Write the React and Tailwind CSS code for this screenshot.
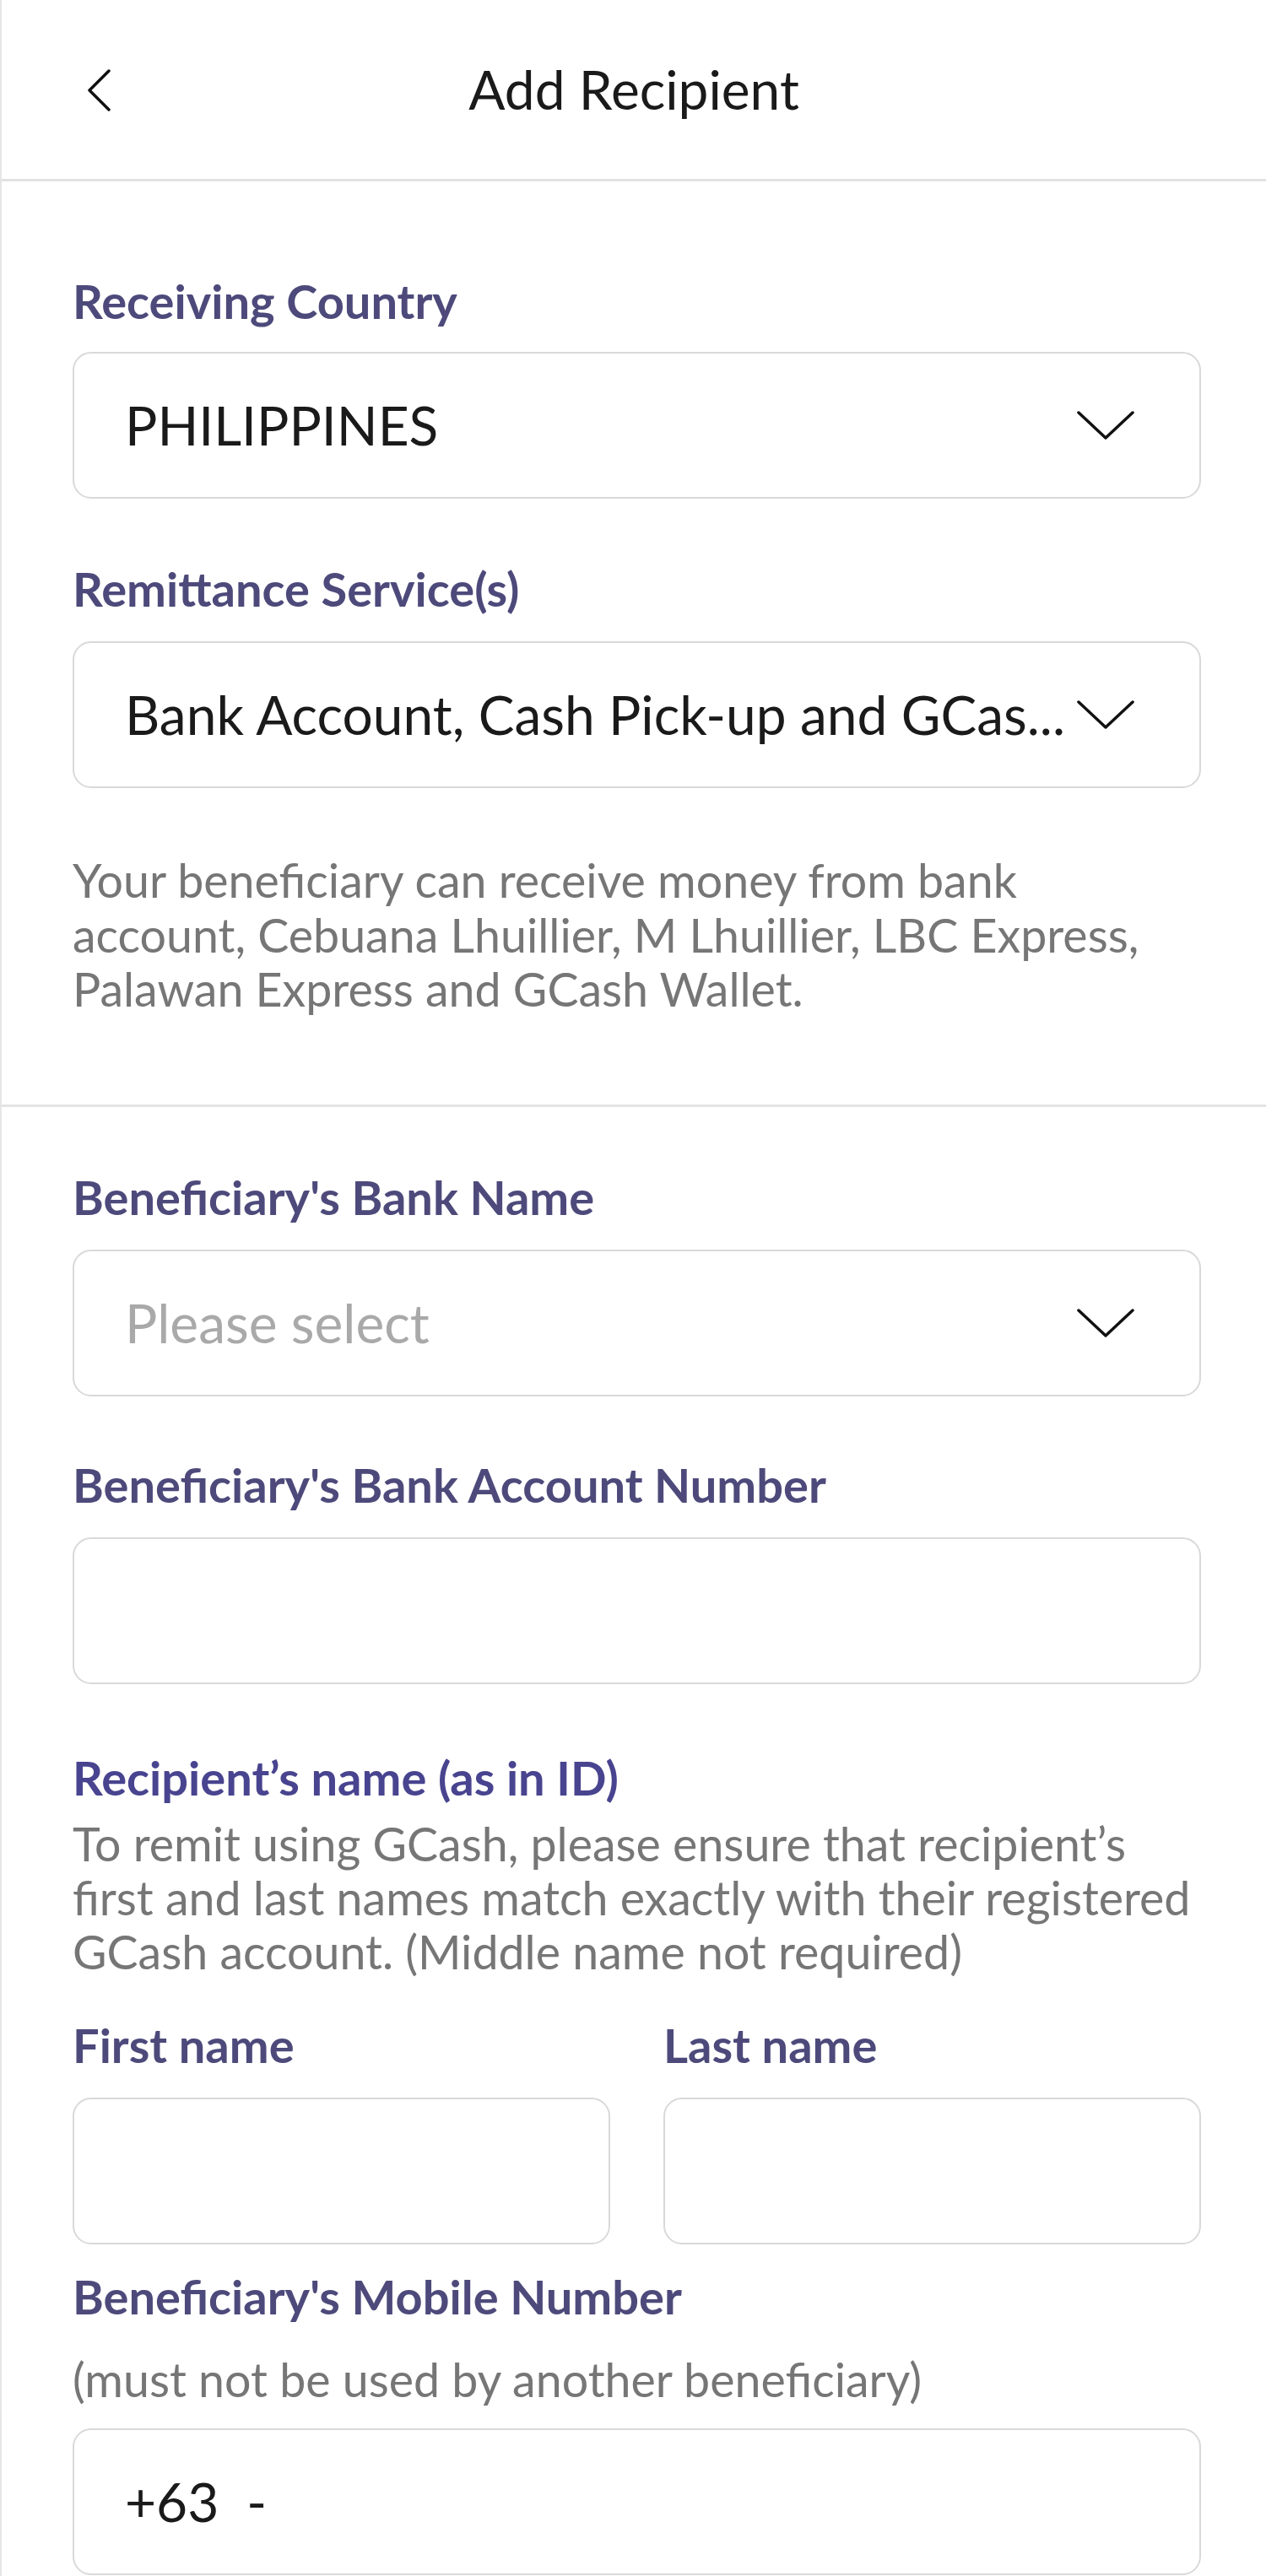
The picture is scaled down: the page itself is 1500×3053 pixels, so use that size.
import React from "react";

const Chevron = () => (
  <svg width="68" height="36" viewBox="0 0 68 36" fill="none" className="shrink-0">
    <polyline points="2,3 34,33 66,3" stroke="#111" strokeWidth="3.5" strokeLinecap="round" strokeLinejoin="round" />
  </svg>
);

const Label = ({ children, className = "" }) => (
  <div className={`text-[56px] leading-[64px] font-bold text-[#4d4a7b] ${className}`}>{children}</div>
);

const Box = ({ children, className = "" }) => (
  <div className={`h-[174px] border-2 border-[#d9d9d9] rounded-[22px] flex items-center pl-[60px] pr-[77px] ${className}`}>
    {children}
  </div>
);

export default function App() {
  return (
    <div className="min-h-screen bg-white border-l-2 border-[#e6e6e6] font-[Lato,sans-serif] text-[#1a1a1a]">
      <header className="relative h-[215px] border-b-[3px] border-[#e2e2e2] flex items-center justify-center">
        <button className="absolute left-[100px] top-[82px]">
          <svg width="30" height="50" viewBox="0 0 30 50" fill="none">
            <polyline points="27,2 4,25 27,48" stroke="#111" strokeWidth="3.5" strokeLinecap="round" strokeLinejoin="round" />
          </svg>
        </button>
        <h1 className="text-[64px] leading-[64px] font-normal">Add Recipient</h1>
      </header>

      <section className="pl-[84px] pr-[77px] pt-[110px] pb-[104px]">
        <Label className="mb-[28px]">Receiving Country</Label>
        <Box className="justify-between">
          <span className="text-[64px] leading-[64px]">PHILIPPINES</span>
          <Chevron />
        </Box>

        <Label className="mt-[75px] mb-[30px]">Remittance Service(s)</Label>
        <Box className="justify-between">
          <span className="text-[64px] leading-[64px] whitespace-nowrap">Bank Account, Cash Pick-up and GCas...</span>
          <Chevron />
        </Box>

        <p className="mt-[77px] text-[55.5px] leading-[64.5px] text-[#767676]">
          Your beneficiary can receive money from bank<br />
          account, Cebuana Lhuillier, M Lhuillier, LBC Express,<br />
          Palawan Express and GCash Wallet.
        </p>
      </section>

      <div className="h-[3px] bg-[#e4e4e4]" />

      <section className="pl-[84px] pr-[77px] pt-[75px]">
        <Label className="mb-[30px]">Beneficiary's Bank Name</Label>
        <Box className="justify-between">
          <span className="text-[64px] leading-[64px] text-[#a9a9a9]">Please select</span>
          <Chevron />
        </Box>

        <Label className="mt-[73px] mb-[30px]">Beneficiary's Bank Account Number</Label>
        <Box />

        <div className="mt-[79px] text-[56px] leading-[64px] font-bold text-[#49448f]">Recipient’s name (as in ID)</div>
        <p className="mt-[14px] text-[55.5px] leading-[64px] text-[#767676]">
          To remit using GCash, please ensure that recipient’s<br />
          first and last names match exactly with their registered<br />
          GCash account. (Middle name not required)
        </p>

        <div className="mt-[47px] grid grid-cols-2 gap-x-[63px]">
          <div>
            <Label className="mb-[30px]">First name</Label>
            <Box />
          </div>
          <div>
            <Label className="mb-[30px]">Last name</Label>
            <Box />
          </div>
        </div>

        <Label className="mt-[30px]">Beneficiary's Mobile Number</Label>
        <p className="mt-[34px] text-[55.5px] leading-[64px] text-[#767676]">(must not be used by another beneficiary)</p>
        <Box className="mt-[26px]">
          <span className="text-[64px] leading-[64px]">+63&nbsp;&nbsp;-</span>
        </Box>
      </section>
    </div>
  );
}
